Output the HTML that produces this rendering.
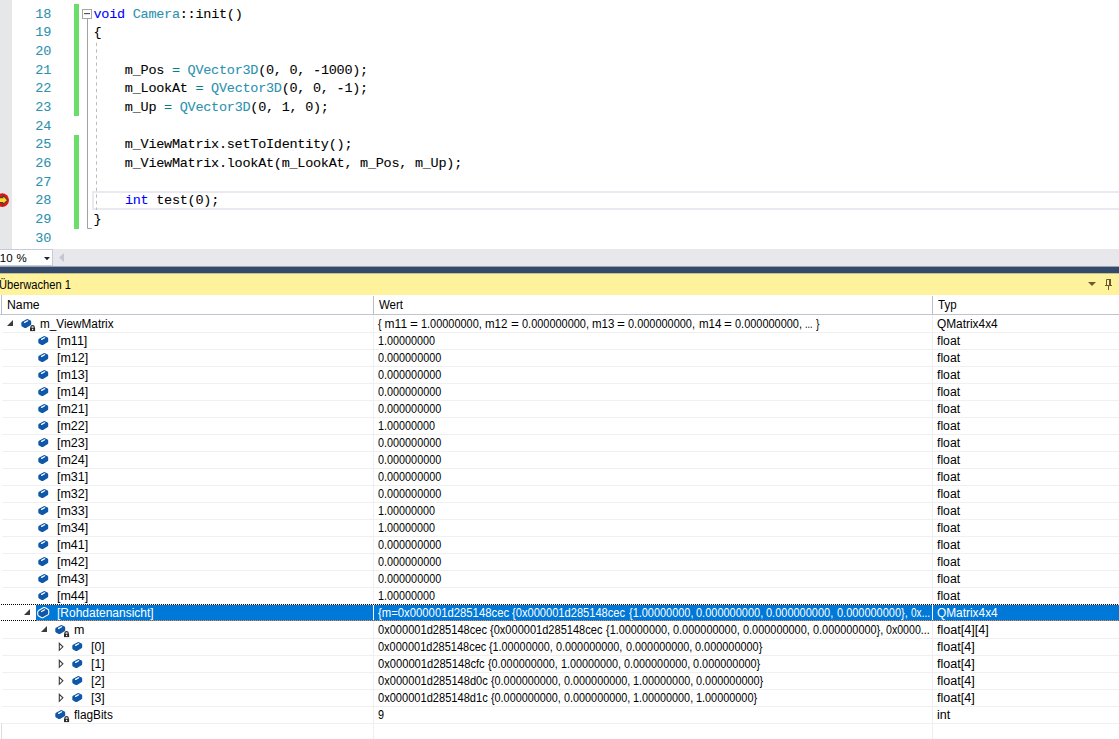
<!DOCTYPE html>
<html lang="de">
<head>
<meta charset="utf-8">
<title>Überwachen 1</title>
<style>
html,body{margin:0;padding:0;}
body{width:1119px;height:739px;overflow:hidden;background:#fff;position:relative;font-family:"Liberation Sans",sans-serif;font-size:12px;color:#000;}
.abs{position:absolute;}
.t{position:absolute;white-space:pre;line-height:17px;height:17px;transform-origin:0 0;}
.code{position:absolute;white-space:pre;font-family:"Liberation Mono",monospace;font-size:13.5px;letter-spacing:-0.2614px;line-height:18.68px;height:18.68px;color:#000;-webkit-text-stroke:0.08px;}
.k{position:absolute;top:0;white-space:pre;transform-origin:0 0;}
.ln{color:#2b91af;}
.kw{color:#0000ff;}
.ty{color:#2b91af;}
.op{color:#008080;}
.sel{color:#fff;}
svg{position:absolute;left:0;top:0;overflow:visible;}
</style>
</head>
<body>
<div class="abs" style="left:0;top:0;width:12px;height:249px;background:#e6e7e8"></div>
<div class="abs" style="left:74px;top:4.40px;width:5px;height:112.08px;background:#69df69"></div>
<div class="abs" style="left:74px;top:135.16px;width:5px;height:93.40px;background:#69df69"></div>
<div class="abs" style="left:92px;top:191px;width:1040px;height:14.5px;border:2px solid #e9e9f2"></div>
<div class="code ln" id="ln18" style="left:35.30px;top:5.50px">18</div>
<div class="code" id="c18" style="left:93.50px;top:5.50px"><span class="kw">void</span> <span class="ty">Camera</span>::init()</div>
<div class="code ln" id="ln19" style="left:35.30px;top:24.18px">19</div>
<div class="code" id="c19" style="left:93.50px;top:24.18px">{</div>
<div class="code ln" id="ln20" style="left:35.30px;top:42.86px">20</div>
<div class="code ln" id="ln21" style="left:35.30px;top:61.54px">21</div>
<div class="code" id="c21" style="left:93.50px;top:61.54px">    m_Pos <span class="op">=</span> <span class="ty">QVector3D</span>(0, 0, -1000);</div>
<div class="code ln" id="ln22" style="left:35.30px;top:80.22px">22</div>
<div class="code" id="c22" style="left:93.50px;top:80.22px">    m_LookAt <span class="op">=</span> <span class="ty">QVector3D</span>(0, 0, -1);</div>
<div class="code ln" id="ln23" style="left:35.30px;top:98.90px">23</div>
<div class="code" id="c23" style="left:93.50px;top:98.90px">    m_Up <span class="op">=</span> <span class="ty">QVector3D</span>(0, 1, 0);</div>
<div class="code ln" id="ln24" style="left:35.30px;top:117.58px">24</div>
<div class="code ln" id="ln25" style="left:35.30px;top:136.26px">25</div>
<div class="code" id="c25" style="left:93.50px;top:136.26px">    m_ViewMatrix.setToIdentity();</div>
<div class="code ln" id="ln26" style="left:35.30px;top:154.94px">26</div>
<div class="code" id="c26" style="left:93.50px;top:154.94px">    m_ViewMatrix.lookAt(m_LookAt, m_Pos, m_Up);</div>
<div class="code ln" id="ln27" style="left:35.30px;top:173.62px">27</div>
<div class="code ln" id="ln28" style="left:35.30px;top:192.30px">28</div>
<div class="code" id="c28" style="left:93.50px;top:192.30px">    <span class="kw">int</span> test(0);</div>
<div class="code ln" id="ln29" style="left:35.30px;top:210.98px">29</div>
<div class="code" id="c29" style="left:93.50px;top:210.98px">}</div>
<div class="code ln" id="ln30" style="left:35.30px;top:229.66px">30</div>
<svg width="1119" height="250" viewBox="0 0 1119 250">
<path d="M87.5 19V228.5H92" fill="none" stroke="#a2a2a2" stroke-width="1"/>
<rect x="82.5" y="9.5" width="9" height="9" fill="#fff" stroke="#a6a6a6" stroke-width="1"/>
<path d="M84 13.6H90" stroke="#4a4a4a" stroke-width="1.1"/>
<path d="M96.5 42.7V210" stroke="#bdbdbd" stroke-width="1" stroke-dasharray="3.4 3.19"/>
<circle cx="2.2" cy="200.1" r="6.8" fill="#ee1111"/>
<path d="M-4 197.6H2.8V195.2L7.6 200.1L2.8 205V202.6H-4Z" fill="#ffd92a" stroke="#4e3f34" stroke-width="1.1" stroke-linejoin="miter"/>
</svg>
<div class="abs" style="left:0;top:249px;width:1119px;height:17px;background:#e8e8ec"></div>
<div class="abs" style="left:-2px;top:249px;width:55px;height:17px;background:#fff;border:1px solid #c6cbdc;box-sizing:border-box"></div>
<div class="t" id="zoom" style="left:-5.7px;top:249.6px;font-size:11.5px;line-height:17px">110</div>
<div class="t" id="zoomp" style="left:16.5px;top:249.6px;font-size:11.5px;line-height:17px">%</div>
<svg width="1119" height="739" viewBox="0 0 1119 739">
<path d="M44 257H50L47 260.2Z" fill="#1b2433"/>
<path d="M64 253V262L59 257.5Z" fill="#c3c6d4"/>
</svg>
<div class="abs" style="left:0;top:273px;width:1119px;height:22px;background:#fff29d"></div>
<svg width="1119" height="739" viewBox="0 0 1119 739"><rect x="0" y="266.5" width="1119" height="6.8" fill="#35496a"/></svg>
<div class="t" id="title" style="left:-0.54px;transform:scaleX(0.9291);top:276.7px">Überwachen 1</div>
<svg width="1119" height="739" viewBox="0 0 1119 739">
<path d="M1088 282H1096L1092 286Z" fill="#6b5a30"/>
<path d="M1106.5 279.5H1110.5V285.5H1106.5Z" fill="none" stroke="#6b5a30" stroke-width="1"/>
<path d="M1109 279H1111V286H1109Z" fill="#6b5a30"/>
<path d="M1105 285.5H1112M1108.5 286V290" stroke="#6b5a30" stroke-width="1"/>
</svg>
<div class="abs" style="left:1px;top:295px;width:1px;height:19px;background:#b9bdcb"></div>
<div class="abs" style="left:1px;top:723px;width:1px;height:16px;background:#dcdde2"></div>
<div class="abs" style="left:0;top:314px;width:1119px;height:1px;background:#bfc4d1"></div>
<div class="abs" style="left:373px;top:296px;width:1px;height:18px;background:#b9bdcb"></div>
<div class="abs" style="left:932px;top:296px;width:1px;height:18px;background:#b9bdcb"></div>
<div class="t" id="hName" style="left:6.71px;transform:scaleX(1.0188);top:297px">Name</div>
<div class="t" id="hWert" style="left:379.18px;transform:scaleX(0.9560);top:297px">Wert</div>
<div class="t" id="hTyp" style="left:938.46px;transform:scaleX(0.9600);top:297px">Typ</div>
<div class="abs" style="left:373px;top:315px;width:1px;height:424px;background:#efefef"></div>
<div class="abs" style="left:932px;top:315px;width:1px;height:424px;background:#efefef"></div>
<div class="abs" style="left:2px;top:332px;width:1119px;height:1px;background:#f0f0f0"></div>
<div class="abs" style="left:2px;top:349px;width:1119px;height:1px;background:#f0f0f0"></div>
<div class="abs" style="left:2px;top:366px;width:1119px;height:1px;background:#f0f0f0"></div>
<div class="abs" style="left:2px;top:383px;width:1119px;height:1px;background:#f0f0f0"></div>
<div class="abs" style="left:2px;top:400px;width:1119px;height:1px;background:#f0f0f0"></div>
<div class="abs" style="left:2px;top:417px;width:1119px;height:1px;background:#f0f0f0"></div>
<div class="abs" style="left:2px;top:434px;width:1119px;height:1px;background:#f0f0f0"></div>
<div class="abs" style="left:2px;top:451px;width:1119px;height:1px;background:#f0f0f0"></div>
<div class="abs" style="left:2px;top:468px;width:1119px;height:1px;background:#f0f0f0"></div>
<div class="abs" style="left:2px;top:485px;width:1119px;height:1px;background:#f0f0f0"></div>
<div class="abs" style="left:2px;top:502px;width:1119px;height:1px;background:#f0f0f0"></div>
<div class="abs" style="left:2px;top:519px;width:1119px;height:1px;background:#f0f0f0"></div>
<div class="abs" style="left:2px;top:536px;width:1119px;height:1px;background:#f0f0f0"></div>
<div class="abs" style="left:2px;top:553px;width:1119px;height:1px;background:#f0f0f0"></div>
<div class="abs" style="left:2px;top:570px;width:1119px;height:1px;background:#f0f0f0"></div>
<div class="abs" style="left:2px;top:587px;width:1119px;height:1px;background:#f0f0f0"></div>
<div class="abs" style="left:2px;top:638px;width:1119px;height:1px;background:#f0f0f0"></div>
<div class="abs" style="left:2px;top:655px;width:1119px;height:1px;background:#f0f0f0"></div>
<div class="abs" style="left:2px;top:672px;width:1119px;height:1px;background:#f0f0f0"></div>
<div class="abs" style="left:2px;top:689px;width:1119px;height:1px;background:#f0f0f0"></div>
<div class="abs" style="left:2px;top:706px;width:1119px;height:1px;background:#f0f0f0"></div>
<div class="abs" style="left:2px;top:723px;width:1119px;height:1px;background:#f0f0f0"></div>
<div class="abs" style="left:2px;top:740px;width:1119px;height:1px;background:#f0f0f0"></div>
<div class="abs" style="left:36px;top:605px;width:1119px;height:16px;background:#0078d7"></div>
<div class="abs" style="left:373px;top:605px;width:1px;height:15px;background:#fff"></div>
<div class="abs" style="left:932px;top:605px;width:1px;height:15px;background:#fff"></div>
<svg width="1119" height="739" viewBox="0 0 1119 739">
<path d="M1 604.5H1119" stroke="#fff" stroke-width="1"/>
<path d="M1 604.5H1119" stroke="#000" stroke-width="1" stroke-dasharray="1 1"/>
<path d="M1 620.5H36" stroke="#fff" stroke-width="1"/>
<path d="M1 620.5H36" stroke="#000" stroke-width="1" stroke-dasharray="1 1"/>
<path d="M37 620.5H1119" stroke="#ff8728" stroke-width="1" stroke-dasharray="1 1"/>
</svg>
<svg width="1119" height="739" viewBox="0 0 1119 739">
<path d="M13 320V326H7Z" fill="#3b3b3b"/>
<g transform="translate(21 318.9)"><path d="M0.3 4.1Q0.3 3.3 1 2.9L5.6 0.3Q6.3 -0.1 7 0.3L9.6 1.7Q10.2 2.1 10.2 2.9V5.3Q10.2 6 9.5 6.4L5 9Q4.3 9.4 3.6 9L1 7.5Q0.3 7.1 0.3 6.3Z" fill="#0f57a8"/><path d="M3.6 3.5L6.6 1.8" stroke="#fff" stroke-width="1.3" stroke-linecap="round" fill="none"/><path d="M9 8.8H14.1V12.2H9Z" fill="#2b2b2b"/><path d="M9.9 9V8.1Q9.9 6.7 11.55 6.7Q13.2 6.7 13.2 8.1V9" fill="none" stroke="#2b2b2b" stroke-width="1.15"/><rect x="10.95" y="9.9" width="1.25" height="1.3" fill="#fff"/></g>
<g transform="translate(38 335.9)"><path d="M0.3 4.1Q0.3 3.3 1 2.9L5.6 0.3Q6.3 -0.1 7 0.3L9.6 1.7Q10.2 2.1 10.2 2.9V5.3Q10.2 6 9.5 6.4L5 9Q4.3 9.4 3.6 9L1 7.5Q0.3 7.1 0.3 6.3Z" fill="#0f57a8"/><path d="M3.6 3.5L6.6 1.8" stroke="#fff" stroke-width="1.3" stroke-linecap="round" fill="none"/></g>
<g transform="translate(38 352.9)"><path d="M0.3 4.1Q0.3 3.3 1 2.9L5.6 0.3Q6.3 -0.1 7 0.3L9.6 1.7Q10.2 2.1 10.2 2.9V5.3Q10.2 6 9.5 6.4L5 9Q4.3 9.4 3.6 9L1 7.5Q0.3 7.1 0.3 6.3Z" fill="#0f57a8"/><path d="M3.6 3.5L6.6 1.8" stroke="#fff" stroke-width="1.3" stroke-linecap="round" fill="none"/></g>
<g transform="translate(38 369.9)"><path d="M0.3 4.1Q0.3 3.3 1 2.9L5.6 0.3Q6.3 -0.1 7 0.3L9.6 1.7Q10.2 2.1 10.2 2.9V5.3Q10.2 6 9.5 6.4L5 9Q4.3 9.4 3.6 9L1 7.5Q0.3 7.1 0.3 6.3Z" fill="#0f57a8"/><path d="M3.6 3.5L6.6 1.8" stroke="#fff" stroke-width="1.3" stroke-linecap="round" fill="none"/></g>
<g transform="translate(38 386.9)"><path d="M0.3 4.1Q0.3 3.3 1 2.9L5.6 0.3Q6.3 -0.1 7 0.3L9.6 1.7Q10.2 2.1 10.2 2.9V5.3Q10.2 6 9.5 6.4L5 9Q4.3 9.4 3.6 9L1 7.5Q0.3 7.1 0.3 6.3Z" fill="#0f57a8"/><path d="M3.6 3.5L6.6 1.8" stroke="#fff" stroke-width="1.3" stroke-linecap="round" fill="none"/></g>
<g transform="translate(38 403.9)"><path d="M0.3 4.1Q0.3 3.3 1 2.9L5.6 0.3Q6.3 -0.1 7 0.3L9.6 1.7Q10.2 2.1 10.2 2.9V5.3Q10.2 6 9.5 6.4L5 9Q4.3 9.4 3.6 9L1 7.5Q0.3 7.1 0.3 6.3Z" fill="#0f57a8"/><path d="M3.6 3.5L6.6 1.8" stroke="#fff" stroke-width="1.3" stroke-linecap="round" fill="none"/></g>
<g transform="translate(38 420.9)"><path d="M0.3 4.1Q0.3 3.3 1 2.9L5.6 0.3Q6.3 -0.1 7 0.3L9.6 1.7Q10.2 2.1 10.2 2.9V5.3Q10.2 6 9.5 6.4L5 9Q4.3 9.4 3.6 9L1 7.5Q0.3 7.1 0.3 6.3Z" fill="#0f57a8"/><path d="M3.6 3.5L6.6 1.8" stroke="#fff" stroke-width="1.3" stroke-linecap="round" fill="none"/></g>
<g transform="translate(38 437.9)"><path d="M0.3 4.1Q0.3 3.3 1 2.9L5.6 0.3Q6.3 -0.1 7 0.3L9.6 1.7Q10.2 2.1 10.2 2.9V5.3Q10.2 6 9.5 6.4L5 9Q4.3 9.4 3.6 9L1 7.5Q0.3 7.1 0.3 6.3Z" fill="#0f57a8"/><path d="M3.6 3.5L6.6 1.8" stroke="#fff" stroke-width="1.3" stroke-linecap="round" fill="none"/></g>
<g transform="translate(38 454.9)"><path d="M0.3 4.1Q0.3 3.3 1 2.9L5.6 0.3Q6.3 -0.1 7 0.3L9.6 1.7Q10.2 2.1 10.2 2.9V5.3Q10.2 6 9.5 6.4L5 9Q4.3 9.4 3.6 9L1 7.5Q0.3 7.1 0.3 6.3Z" fill="#0f57a8"/><path d="M3.6 3.5L6.6 1.8" stroke="#fff" stroke-width="1.3" stroke-linecap="round" fill="none"/></g>
<g transform="translate(38 471.9)"><path d="M0.3 4.1Q0.3 3.3 1 2.9L5.6 0.3Q6.3 -0.1 7 0.3L9.6 1.7Q10.2 2.1 10.2 2.9V5.3Q10.2 6 9.5 6.4L5 9Q4.3 9.4 3.6 9L1 7.5Q0.3 7.1 0.3 6.3Z" fill="#0f57a8"/><path d="M3.6 3.5L6.6 1.8" stroke="#fff" stroke-width="1.3" stroke-linecap="round" fill="none"/></g>
<g transform="translate(38 488.9)"><path d="M0.3 4.1Q0.3 3.3 1 2.9L5.6 0.3Q6.3 -0.1 7 0.3L9.6 1.7Q10.2 2.1 10.2 2.9V5.3Q10.2 6 9.5 6.4L5 9Q4.3 9.4 3.6 9L1 7.5Q0.3 7.1 0.3 6.3Z" fill="#0f57a8"/><path d="M3.6 3.5L6.6 1.8" stroke="#fff" stroke-width="1.3" stroke-linecap="round" fill="none"/></g>
<g transform="translate(38 505.9)"><path d="M0.3 4.1Q0.3 3.3 1 2.9L5.6 0.3Q6.3 -0.1 7 0.3L9.6 1.7Q10.2 2.1 10.2 2.9V5.3Q10.2 6 9.5 6.4L5 9Q4.3 9.4 3.6 9L1 7.5Q0.3 7.1 0.3 6.3Z" fill="#0f57a8"/><path d="M3.6 3.5L6.6 1.8" stroke="#fff" stroke-width="1.3" stroke-linecap="round" fill="none"/></g>
<g transform="translate(38 522.9)"><path d="M0.3 4.1Q0.3 3.3 1 2.9L5.6 0.3Q6.3 -0.1 7 0.3L9.6 1.7Q10.2 2.1 10.2 2.9V5.3Q10.2 6 9.5 6.4L5 9Q4.3 9.4 3.6 9L1 7.5Q0.3 7.1 0.3 6.3Z" fill="#0f57a8"/><path d="M3.6 3.5L6.6 1.8" stroke="#fff" stroke-width="1.3" stroke-linecap="round" fill="none"/></g>
<g transform="translate(38 539.9)"><path d="M0.3 4.1Q0.3 3.3 1 2.9L5.6 0.3Q6.3 -0.1 7 0.3L9.6 1.7Q10.2 2.1 10.2 2.9V5.3Q10.2 6 9.5 6.4L5 9Q4.3 9.4 3.6 9L1 7.5Q0.3 7.1 0.3 6.3Z" fill="#0f57a8"/><path d="M3.6 3.5L6.6 1.8" stroke="#fff" stroke-width="1.3" stroke-linecap="round" fill="none"/></g>
<g transform="translate(38 556.9)"><path d="M0.3 4.1Q0.3 3.3 1 2.9L5.6 0.3Q6.3 -0.1 7 0.3L9.6 1.7Q10.2 2.1 10.2 2.9V5.3Q10.2 6 9.5 6.4L5 9Q4.3 9.4 3.6 9L1 7.5Q0.3 7.1 0.3 6.3Z" fill="#0f57a8"/><path d="M3.6 3.5L6.6 1.8" stroke="#fff" stroke-width="1.3" stroke-linecap="round" fill="none"/></g>
<g transform="translate(38 573.9)"><path d="M0.3 4.1Q0.3 3.3 1 2.9L5.6 0.3Q6.3 -0.1 7 0.3L9.6 1.7Q10.2 2.1 10.2 2.9V5.3Q10.2 6 9.5 6.4L5 9Q4.3 9.4 3.6 9L1 7.5Q0.3 7.1 0.3 6.3Z" fill="#0f57a8"/><path d="M3.6 3.5L6.6 1.8" stroke="#fff" stroke-width="1.3" stroke-linecap="round" fill="none"/></g>
<g transform="translate(38 590.9)"><path d="M0.3 4.1Q0.3 3.3 1 2.9L5.6 0.3Q6.3 -0.1 7 0.3L9.6 1.7Q10.2 2.1 10.2 2.9V5.3Q10.2 6 9.5 6.4L5 9Q4.3 9.4 3.6 9L1 7.5Q0.3 7.1 0.3 6.3Z" fill="#0f57a8"/><path d="M3.6 3.5L6.6 1.8" stroke="#fff" stroke-width="1.3" stroke-linecap="round" fill="none"/></g>
<path d="M30 609V615H24Z" fill="#3b3b3b"/>
<g transform="translate(38 608)"><path d="M0.3 4.1Q0.3 3.3 1 2.9L5.6 0.3Q6.3 -0.1 7 0.3L9.6 1.7Q10.2 2.1 10.2 2.9V5.3Q10.2 6 9.5 6.4L5 9Q4.3 9.4 3.6 9L1 7.5Q0.3 7.1 0.3 6.3Z" fill="#0f57a8" stroke="#fff" stroke-width="2.2" stroke-linejoin="round" paint-order="stroke"/><path d="M3.6 3.5L6.6 1.8" stroke="#fff" stroke-width="1.3" stroke-linecap="round" fill="none"/></g>
<path d="M47 626V632H41Z" fill="#3b3b3b"/>
<g transform="translate(55 624.9)"><path d="M0.3 4.1Q0.3 3.3 1 2.9L5.6 0.3Q6.3 -0.1 7 0.3L9.6 1.7Q10.2 2.1 10.2 2.9V5.3Q10.2 6 9.5 6.4L5 9Q4.3 9.4 3.6 9L1 7.5Q0.3 7.1 0.3 6.3Z" fill="#0f57a8"/><path d="M3.6 3.5L6.6 1.8" stroke="#fff" stroke-width="1.3" stroke-linecap="round" fill="none"/><path d="M9 8.8H14.1V12.2H9Z" fill="#2b2b2b"/><path d="M9.9 9V8.1Q9.9 6.7 11.55 6.7Q13.2 6.7 13.2 8.1V9" fill="none" stroke="#2b2b2b" stroke-width="1.15"/><rect x="10.95" y="9.9" width="1.25" height="1.3" fill="#fff"/></g>
<path d="M59.3 643.3V650.3L62.9 646.8Z" fill="none" stroke="#3a3a3a" stroke-width="1.1"/>
<g transform="translate(72 641.9)"><path d="M0.3 4.1Q0.3 3.3 1 2.9L5.6 0.3Q6.3 -0.1 7 0.3L9.6 1.7Q10.2 2.1 10.2 2.9V5.3Q10.2 6 9.5 6.4L5 9Q4.3 9.4 3.6 9L1 7.5Q0.3 7.1 0.3 6.3Z" fill="#0f57a8"/><path d="M3.6 3.5L6.6 1.8" stroke="#fff" stroke-width="1.3" stroke-linecap="round" fill="none"/></g>
<path d="M59.3 660.3V667.3L62.9 663.8Z" fill="none" stroke="#3a3a3a" stroke-width="1.1"/>
<g transform="translate(72 658.9)"><path d="M0.3 4.1Q0.3 3.3 1 2.9L5.6 0.3Q6.3 -0.1 7 0.3L9.6 1.7Q10.2 2.1 10.2 2.9V5.3Q10.2 6 9.5 6.4L5 9Q4.3 9.4 3.6 9L1 7.5Q0.3 7.1 0.3 6.3Z" fill="#0f57a8"/><path d="M3.6 3.5L6.6 1.8" stroke="#fff" stroke-width="1.3" stroke-linecap="round" fill="none"/></g>
<path d="M59.3 677.3V684.3L62.9 680.8Z" fill="none" stroke="#3a3a3a" stroke-width="1.1"/>
<g transform="translate(72 675.9)"><path d="M0.3 4.1Q0.3 3.3 1 2.9L5.6 0.3Q6.3 -0.1 7 0.3L9.6 1.7Q10.2 2.1 10.2 2.9V5.3Q10.2 6 9.5 6.4L5 9Q4.3 9.4 3.6 9L1 7.5Q0.3 7.1 0.3 6.3Z" fill="#0f57a8"/><path d="M3.6 3.5L6.6 1.8" stroke="#fff" stroke-width="1.3" stroke-linecap="round" fill="none"/></g>
<path d="M59.3 694.3V701.3L62.9 697.8Z" fill="none" stroke="#3a3a3a" stroke-width="1.1"/>
<g transform="translate(72 692.9)"><path d="M0.3 4.1Q0.3 3.3 1 2.9L5.6 0.3Q6.3 -0.1 7 0.3L9.6 1.7Q10.2 2.1 10.2 2.9V5.3Q10.2 6 9.5 6.4L5 9Q4.3 9.4 3.6 9L1 7.5Q0.3 7.1 0.3 6.3Z" fill="#0f57a8"/><path d="M3.6 3.5L6.6 1.8" stroke="#fff" stroke-width="1.3" stroke-linecap="round" fill="none"/></g>
<g transform="translate(55 709.9)"><path d="M0.3 4.1Q0.3 3.3 1 2.9L5.6 0.3Q6.3 -0.1 7 0.3L9.6 1.7Q10.2 2.1 10.2 2.9V5.3Q10.2 6 9.5 6.4L5 9Q4.3 9.4 3.6 9L1 7.5Q0.3 7.1 0.3 6.3Z" fill="#0f57a8"/><path d="M3.6 3.5L6.6 1.8" stroke="#fff" stroke-width="1.3" stroke-linecap="round" fill="none"/><path d="M9 8.8H14.1V12.2H9Z" fill="#2b2b2b"/><path d="M9.9 9V8.1Q9.9 6.7 11.55 6.7Q13.2 6.7 13.2 8.1V9" fill="none" stroke="#2b2b2b" stroke-width="1.15"/><rect x="10.95" y="9.9" width="1.25" height="1.3" fill="#fff"/></g>
</svg>
<div class="t" id="n0" style="left:40.17px;transform:scaleX(0.9788);top:316.0px">m_ViewMatrix</div>
<div class="t" id="v0" style="left:0;top:316.0px;width:932px"><span class="k" style="left:378.00px;transform:scaleX(0.8634)">{ </span><span class="k" style="left:384.61px;transform:scaleX(1.0000)">m11 </span><span class="k" style="left:410.21px;transform:scaleX(1.1221)">= </span><span class="k" style="left:421.23px;transform:scaleX(0.9105)">1.00000000, </span><span class="k" style="left:485.14px;transform:scaleX(0.9618)">m12 </span><span class="k" style="left:510.74px;transform:scaleX(1.1221)">= </span><span class="k" style="left:521.75px;transform:scaleX(0.9121)">0.000000000, </span><span class="k" style="left:591.86px;transform:scaleX(0.9618)">m13 </span><span class="k" style="left:617.46px;transform:scaleX(1.1221)">= </span><span class="k" style="left:628.48px;transform:scaleX(0.9121)">0.000000000, </span><span class="k" style="left:698.58px;transform:scaleX(0.9618)">m14 </span><span class="k" style="left:724.19px;transform:scaleX(1.1221)">= </span><span class="k" style="left:735.20px;transform:scaleX(0.9121)">0.000000000, </span><span class="k" style="left:805.31px;transform:scaleX(0.7483)">... </span><span class="k" style="left:815.94px;transform:scaleX(0.8634)">}</span></div>
<div class="t" id="y0" style="left:937.46px;transform:scaleX(0.9893);top:316.0px">QMatrix4x4</div>
<div class="t" id="n1" style="left:57.27px;transform:scaleX(1.0407);top:333.0px">[m11]</div>
<div class="t" id="v1" style="left:378.11px;transform:scaleX(0.8998);top:333.0px">1.00000000</div>
<div class="t" id="y1" style="left:937.37px;transform:scaleX(1.0178);top:333.0px">float</div>
<div class="t" id="n2" style="left:57.27px;transform:scaleX(1.0407);top:350.0px">[m12]</div>
<div class="t" id="v2" style="left:377.96px;transform:scaleX(0.9025);top:350.0px">0.000000000</div>
<div class="t" id="y2" style="left:937.37px;transform:scaleX(1.0178);top:350.0px">float</div>
<div class="t" id="n3" style="left:57.27px;transform:scaleX(1.0407);top:367.0px">[m13]</div>
<div class="t" id="v3" style="left:377.96px;transform:scaleX(0.9025);top:367.0px">0.000000000</div>
<div class="t" id="y3" style="left:937.37px;transform:scaleX(1.0178);top:367.0px">float</div>
<div class="t" id="n4" style="left:57.27px;transform:scaleX(1.0407);top:384.0px">[m14]</div>
<div class="t" id="v4" style="left:377.96px;transform:scaleX(0.9025);top:384.0px">0.000000000</div>
<div class="t" id="y4" style="left:937.37px;transform:scaleX(1.0178);top:384.0px">float</div>
<div class="t" id="n5" style="left:57.27px;transform:scaleX(1.0407);top:401.0px">[m21]</div>
<div class="t" id="v5" style="left:377.96px;transform:scaleX(0.9025);top:401.0px">0.000000000</div>
<div class="t" id="y5" style="left:937.37px;transform:scaleX(1.0178);top:401.0px">float</div>
<div class="t" id="n6" style="left:57.27px;transform:scaleX(1.0407);top:418.0px">[m22]</div>
<div class="t" id="v6" style="left:378.11px;transform:scaleX(0.8998);top:418.0px">1.00000000</div>
<div class="t" id="y6" style="left:937.37px;transform:scaleX(1.0178);top:418.0px">float</div>
<div class="t" id="n7" style="left:57.27px;transform:scaleX(1.0407);top:435.0px">[m23]</div>
<div class="t" id="v7" style="left:377.96px;transform:scaleX(0.9025);top:435.0px">0.000000000</div>
<div class="t" id="y7" style="left:937.37px;transform:scaleX(1.0178);top:435.0px">float</div>
<div class="t" id="n8" style="left:57.27px;transform:scaleX(1.0407);top:452.0px">[m24]</div>
<div class="t" id="v8" style="left:377.96px;transform:scaleX(0.9025);top:452.0px">0.000000000</div>
<div class="t" id="y8" style="left:937.37px;transform:scaleX(1.0178);top:452.0px">float</div>
<div class="t" id="n9" style="left:57.27px;transform:scaleX(1.0407);top:469.0px">[m31]</div>
<div class="t" id="v9" style="left:377.96px;transform:scaleX(0.9025);top:469.0px">0.000000000</div>
<div class="t" id="y9" style="left:937.37px;transform:scaleX(1.0178);top:469.0px">float</div>
<div class="t" id="n10" style="left:57.27px;transform:scaleX(1.0407);top:486.0px">[m32]</div>
<div class="t" id="v10" style="left:377.96px;transform:scaleX(0.9025);top:486.0px">0.000000000</div>
<div class="t" id="y10" style="left:937.37px;transform:scaleX(1.0178);top:486.0px">float</div>
<div class="t" id="n11" style="left:57.27px;transform:scaleX(1.0407);top:503.0px">[m33]</div>
<div class="t" id="v11" style="left:378.11px;transform:scaleX(0.8998);top:503.0px">1.00000000</div>
<div class="t" id="y11" style="left:937.37px;transform:scaleX(1.0178);top:503.0px">float</div>
<div class="t" id="n12" style="left:57.27px;transform:scaleX(1.0407);top:520.0px">[m34]</div>
<div class="t" id="v12" style="left:378.11px;transform:scaleX(0.8998);top:520.0px">1.00000000</div>
<div class="t" id="y12" style="left:937.37px;transform:scaleX(1.0178);top:520.0px">float</div>
<div class="t" id="n13" style="left:57.27px;transform:scaleX(1.0407);top:537.0px">[m41]</div>
<div class="t" id="v13" style="left:377.96px;transform:scaleX(0.9025);top:537.0px">0.000000000</div>
<div class="t" id="y13" style="left:937.37px;transform:scaleX(1.0178);top:537.0px">float</div>
<div class="t" id="n14" style="left:57.27px;transform:scaleX(1.0407);top:554.0px">[m42]</div>
<div class="t" id="v14" style="left:377.96px;transform:scaleX(0.9025);top:554.0px">0.000000000</div>
<div class="t" id="y14" style="left:937.37px;transform:scaleX(1.0178);top:554.0px">float</div>
<div class="t" id="n15" style="left:57.27px;transform:scaleX(1.0407);top:571.0px">[m43]</div>
<div class="t" id="v15" style="left:377.96px;transform:scaleX(0.9025);top:571.0px">0.000000000</div>
<div class="t" id="y15" style="left:937.37px;transform:scaleX(1.0178);top:571.0px">float</div>
<div class="t" id="n16" style="left:57.27px;transform:scaleX(1.0407);top:588.0px">[m44]</div>
<div class="t" id="v16" style="left:378.11px;transform:scaleX(0.8998);top:588.0px">1.00000000</div>
<div class="t" id="y16" style="left:937.37px;transform:scaleX(1.0178);top:588.0px">float</div>
<div class="t sel" id="n17" style="left:57.25px;transform:scaleX(0.9995);top:605.0px">[Rohdatenansicht]</div>
<div class="t sel" id="v17" style="left:0;top:605.0px;width:932px"><span class="k" style="left:378.00px;transform:scaleX(0.9422)">{m=0x000001d285148cec </span><span class="k" style="left:512.25px;transform:scaleX(0.9261)">{0x000001d285148cec </span><span class="k" style="left:628.51px;transform:scaleX(0.9111)">{1.00000000, </span><span class="k" style="left:696.12px;transform:scaleX(0.9154)">0.000000000, </span><span class="k" style="left:766.48px;transform:scaleX(0.9154)">0.000000000, </span><span class="k" style="left:836.84px;transform:scaleX(0.9129)">0.000000000}, </span><span class="k" style="left:910.67px;transform:scaleX(0.8391)">0x...</span></div>
<div class="t sel" id="y17" style="left:937.46px;transform:scaleX(0.9893);top:605.0px">QMatrix4x4</div>
<div class="t" id="n18" style="left:74.02px;transform:scaleX(1.0400);top:622.0px">m</div>
<div class="t" id="v18" style="left:0;top:622.0px;width:932px"><span class="k" style="left:378.00px;transform:scaleX(0.9225)">0x000001d285148cec </span><span class="k" style="left:490.09px;transform:scaleX(0.9205)">{0x000001d285148cec </span><span class="k" style="left:605.64px;transform:scaleX(0.9055)">{1.00000000, </span><span class="k" style="left:672.83px;transform:scaleX(0.9098)">0.000000000, </span><span class="k" style="left:742.76px;transform:scaleX(0.9098)">0.000000000, </span><span class="k" style="left:812.69px;transform:scaleX(0.9073)">0.000000000}, </span><span class="k" style="left:886.07px;transform:scaleX(0.8838)">0x0000...</span></div>
<div class="t" id="y18" style="left:937.17px;transform:scaleX(1.0495);top:622.0px">float[4][4]</div>
<div class="t" id="n19" style="left:91.23px;transform:scaleX(1.0213);top:639.0px">[0]</div>
<div class="t" id="v19" style="left:0;top:639.0px;width:932px"><span class="k" style="left:378.00px;transform:scaleX(0.9165)">0x000001d285148cec </span><span class="k" style="left:489.37px;transform:scaleX(0.8997)">{1.00000000, </span><span class="k" style="left:556.13px;transform:scaleX(0.9039)">0.000000000, </span><span class="k" style="left:625.61px;transform:scaleX(0.9039)">0.000000000, </span><span class="k" style="left:695.09px;transform:scaleX(0.9086)">0.000000000}</span></div>
<div class="t" id="y19" style="left:937.17px;transform:scaleX(1.0448);top:639.0px">float[4]</div>
<div class="t" id="n20" style="left:91.23px;transform:scaleX(1.0213);top:656.0px">[1]</div>
<div class="t" id="v20" style="left:0;top:656.0px;width:932px"><span class="k" style="left:378.00px;transform:scaleX(0.9295)">0x000001d285148cfc </span><span class="k" style="left:487.80px;transform:scaleX(0.9000)">{0.000000000, </span><span class="k" style="left:560.59px;transform:scaleX(0.9009)">1.00000000, </span><span class="k" style="left:623.83px;transform:scaleX(0.9025)">0.000000000, </span><span class="k" style="left:693.19px;transform:scaleX(0.9072)">0.000000000}</span></div>
<div class="t" id="y20" style="left:937.17px;transform:scaleX(1.0448);top:656.0px">float[4]</div>
<div class="t" id="n21" style="left:91.23px;transform:scaleX(1.0213);top:673.0px">[2]</div>
<div class="t" id="v21" style="left:0;top:673.0px;width:932px"><span class="k" style="left:378.00px;transform:scaleX(0.9242)">0x000001d285148d0c </span><span class="k" style="left:490.89px;transform:scaleX(0.9007)">{0.000000000, </span><span class="k" style="left:563.74px;transform:scaleX(0.9032)">0.000000000, </span><span class="k" style="left:633.16px;transform:scaleX(0.9016)">1.00000000, </span><span class="k" style="left:696.44px;transform:scaleX(0.9079)">0.000000000}</span></div>
<div class="t" id="y21" style="left:937.17px;transform:scaleX(1.0448);top:673.0px">float[4]</div>
<div class="t" id="n22" style="left:91.23px;transform:scaleX(1.0213);top:690.0px">[3]</div>
<div class="t" id="v22" style="left:0;top:690.0px;width:932px"><span class="k" style="left:378.00px;transform:scaleX(0.9238)">0x000001d285148d1c </span><span class="k" style="left:490.85px;transform:scaleX(0.9003)">{0.000000000, </span><span class="k" style="left:563.66px;transform:scaleX(0.9028)">0.000000000, </span><span class="k" style="left:633.05px;transform:scaleX(0.9012)">1.00000000, </span><span class="k" style="left:696.31px;transform:scaleX(0.9064)">1.00000000}</span></div>
<div class="t" id="y22" style="left:937.17px;transform:scaleX(1.0448);top:690.0px">float[4]</div>
<div class="t" id="n23" style="left:74.18px;transform:scaleX(0.9858);top:707.0px">flagBits</div>
<div class="t" id="v23" style="left:377.96px;transform:scaleX(0.9025);top:707.0px">9</div>
<div class="t" id="y23" style="left:937.17px;transform:scaleX(1.0400);top:707.0px">int</div>
</body>
</html>
